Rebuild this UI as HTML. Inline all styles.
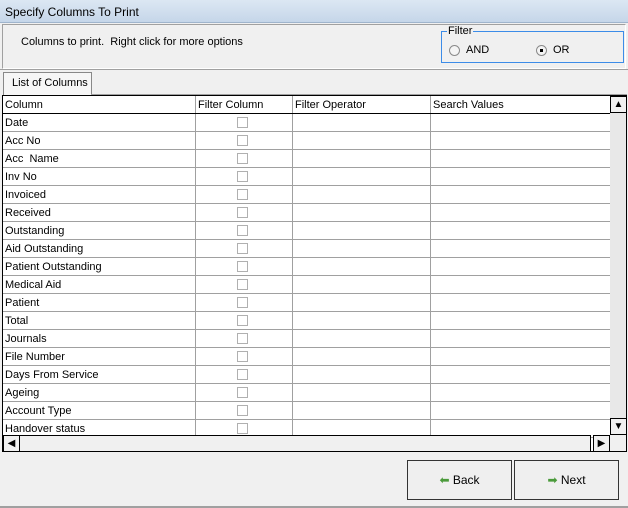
<!DOCTYPE html>
<html><head><style>
*{box-sizing:border-box;margin:0;padding:0}
body{width:628px;height:508px;background:#f0f0f0;font-family:"Liberation Sans",sans-serif;font-size:11px;color:#000;position:relative;overflow:hidden}
.a{position:absolute}
.title{left:0;top:0;width:628px;height:23px;background:linear-gradient(#dce7f3,#c5d6e9);border-bottom:1px solid #9fb4cc;padding:5px 0 0 5px;font-size:12px}
.panel{left:2px;top:24px;width:624px;height:45px;border:1px solid #a0a0a0;border-right-color:#fff;border-bottom-color:#fff}
.fs{left:441px;top:31px;width:183px;height:32px;border:1px solid #3c8ce8}
.rad{width:11px;height:11px;border:1px solid #8a8a8a;border-radius:50%;background:#f4f4f4}
.grid{left:2px;top:95px;width:625px;height:357px;border:1px solid #000;background:#fff;overflow:hidden}
.row{position:absolute;left:0;width:608px;height:18px;border-bottom:1px solid #a0a0a0}
.row span{position:absolute;top:3px}
.cb{position:absolute;left:234px;top:3px;width:11px;height:11px;border:1px solid #b0b0b0}
.vl{position:absolute;top:0;width:1px;height:340px;background:#a0a0a0}
.btn{top:460px;width:105px;height:40px;border:1px solid #333;background:#efefef;font-size:12px;text-align:center;padding-top:12px}
.sb{position:absolute;width:17px;height:17px;border:1px solid #000;background:#f0f0f0;font-size:10px;text-align:center;line-height:15px}
</style></head><body>
<div class="a title">Specify Columns To Print</div>
<div class="a panel"></div>
<div class="a" style="left:21px;top:36px">Columns to print.&nbsp; Right click for more options</div>
<div class="a fs"></div>
<div class="a" style="left:447px;top:25px;background:#f0f0f0;padding:0 1px">Filter</div>
<div class="a rad" style="left:449px;top:45px"></div>
<div class="a" style="left:466px;top:44px">AND</div>
<div class="a rad" style="left:536px;top:45px"><div style="width:3px;height:3px;background:#000;margin:3px"></div></div>
<div class="a" style="left:553px;top:44px">OR</div>
<div class="a" style="left:0;top:69px;width:628px;height:1px;background:#a0a0a0"></div>
<div class="a" style="left:3px;top:72px;width:89px;height:23px;border:1px solid #888;border-bottom:none;background:#f6f6f6;padding:4px 0 0 8px;white-space:nowrap">List of Columns</div>
<div class="a" style="left:91px;top:94px;width:536px;height:1px;background:#a0a0a0"></div>
<div class="a grid">
<div class="vl" style="left:192px"></div><div class="vl" style="left:289px"></div><div class="vl" style="left:427px"></div>
<div class="row" style="top:0;border-bottom-color:#000"><span style="left:2px">Column</span><span style="left:195px">Filter Column</span><span style="left:292px">Filter Operator</span><span style="left:430px">Search Values</span></div>
<div class="row" style="top:18px"><span style="left:2px">Date</span><i class="cb"></i></div>
<div class="row" style="top:36px"><span style="left:2px">Acc No</span><i class="cb"></i></div>
<div class="row" style="top:54px"><span style="left:2px">Acc&nbsp; Name</span><i class="cb"></i></div>
<div class="row" style="top:72px"><span style="left:2px">Inv No</span><i class="cb"></i></div>
<div class="row" style="top:90px"><span style="left:2px">Invoiced</span><i class="cb"></i></div>
<div class="row" style="top:108px"><span style="left:2px">Received</span><i class="cb"></i></div>
<div class="row" style="top:126px"><span style="left:2px">Outstanding</span><i class="cb"></i></div>
<div class="row" style="top:144px"><span style="left:2px">Aid Outstanding</span><i class="cb"></i></div>
<div class="row" style="top:162px"><span style="left:2px">Patient Outstanding</span><i class="cb"></i></div>
<div class="row" style="top:180px"><span style="left:2px">Medical Aid</span><i class="cb"></i></div>
<div class="row" style="top:198px"><span style="left:2px">Patient</span><i class="cb"></i></div>
<div class="row" style="top:216px"><span style="left:2px">Total</span><i class="cb"></i></div>
<div class="row" style="top:234px"><span style="left:2px">Journals</span><i class="cb"></i></div>
<div class="row" style="top:252px"><span style="left:2px">File Number</span><i class="cb"></i></div>
<div class="row" style="top:270px"><span style="left:2px">Days From Service</span><i class="cb"></i></div>
<div class="row" style="top:288px"><span style="left:2px">Ageing</span><i class="cb"></i></div>
<div class="row" style="top:306px"><span style="left:2px">Account Type</span><i class="cb"></i></div>
<div class="row" style="top:324px"><span style="left:2px">Handover status</span><i class="cb"></i></div>
<div class="a" style="left:607px;top:0;width:17px;height:340px;background:#e8e8e8"></div>
<div class="sb" style="left:607px;top:0">▲</div>
<div class="sb" style="left:607px;top:322px">▼</div>
<div class="a" style="left:0;top:339px;width:588px;height:17px;border:1px solid #000;background:#f0f0f0"></div>
<div class="sb" style="left:0;top:339px">◀</div>
<div class="sb" style="left:590px;top:339px">▶</div>
<div class="a" style="left:607px;top:339px;width:18px;height:17px;background:#f0f0f0"></div>
</div>
<div class="a btn" style="left:407px"><span style="color:#4a9a3a">&#x2B05;</span> Back</div>
<div class="a btn" style="left:514px"><span style="color:#4a9a3a">&#x27A1;</span> Next</div>
<div class="a" style="left:0;top:506px;width:628px;height:2px;background:#a0a0a0"></div>
</body></html>
